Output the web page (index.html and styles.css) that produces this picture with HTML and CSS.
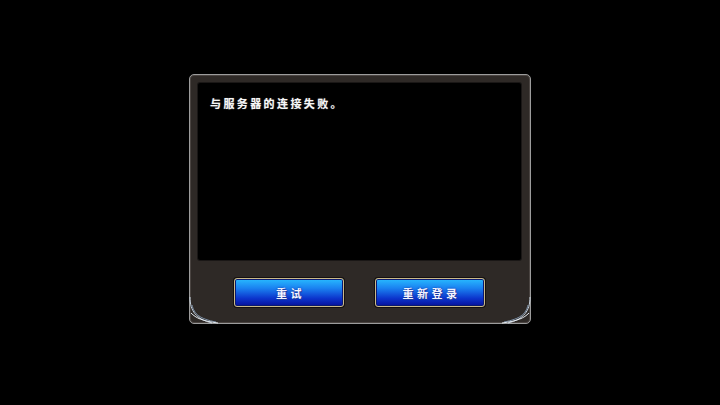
FILE: index.html
```html
<!DOCTYPE html>
<html lang="zh">
<head>
<meta charset="utf-8">
<link rel="stylesheet" href="styles.css">
</head>
<body>
<div class="stage">
  <div class="dialog">
    <div class="panel">
      <p class="msg">与服务器的连接失败。</p>
    </div>
    <div class="actions">
      <button class="btn">重试</button>
      <button class="btn">重新登录</button>
    </div>
    <svg class="corner corner-left" width="32" height="32" viewBox="0 0 32 32">
      <path d="M2 4 C2 18 8 26 24 30" fill="none" stroke="#c8d4e0" stroke-width="1"/>
      <path d="M4 12 C6 21 12 26 28 29" fill="none" stroke="#7f93aa" stroke-width="1"/>
      <path d="M3 20 C8 25 14 28 30 30" fill="none" stroke="#e4eaf0" stroke-width="1"/>
    </svg>
    <svg class="corner corner-right" width="32" height="32" viewBox="0 0 32 32">
      <path d="M30 4 C30 18 24 26 8 30" fill="none" stroke="#c8d4e0" stroke-width="1"/>
      <path d="M28 12 C26 21 20 26 4 29" fill="none" stroke="#7f93aa" stroke-width="1"/>
      <path d="M29 20 C24 25 18 28 2 30" fill="none" stroke="#e4eaf0" stroke-width="1"/>
    </svg>
  </div>
</div>
</body>
</html>
```
FILE: styles.css
```css
html, body {
  margin: 0;
  padding: 0;
  background: #000;
  width: 720px;
  height: 405px;
  overflow: hidden;
}
.stage {
  display: flex;
  justify-content: center;
  padding-top: 74px;
}
.dialog {
  position: relative;
  box-sizing: border-box;
  width: 342px;
  height: 250px;
  border: 1px solid #9c9c9c;
  border-radius: 5px;
  background: #2e2926;
  box-shadow: inset 0 0 0 1px #4a4441;
  padding: 8px 9px 0 8px;
  display: flex;
  flex-direction: column;
}
.panel {
  height: 177px;
  background: #000;
  border-radius: 2px;
  box-shadow: 0 0 0 1px #1a1716;
  box-sizing: border-box;
  padding: 14px 12px 0;
}
.msg {
  margin: 0;
  color: #f6f6f6;
  font-family: "Noto Sans CJK SC", sans-serif;
  font-size: 11px;
  line-height: 12px;
  letter-spacing: 2.4px;
  font-weight: 700;
  text-shadow: 0 0 1px #888;
}
.actions {
  display: flex;
  justify-content: center;
  gap: 31px;
  padding-top: 18px;
}
.btn {
  box-sizing: border-box;
  width: 110px;
  height: 29px;
  border: 1px solid #c9b98a;
  border-radius: 3px;
  background: linear-gradient(to bottom, #28baff 0%, #1a80f0 35%, #0c34cc 72%, #06109a 100%);
  box-shadow: 0 0 0 1px #141010, inset 0 0 0 1px #0a1a70;
  color: #f4f4ff;
  font-family: "Noto Sans CJK SC", sans-serif;
  font-size: 11px;
  font-weight: 700;
  letter-spacing: 3.5px;
  padding: 0 0 0 3px;
  text-shadow: 0 0 2px #1030a0, 1px 1px 0 #2040a0;
  margin: 0;
}
.corner {
  position: absolute;
  bottom: -2px;
}
.corner-left {
  left: -2px;
}
.corner-right {
  right: -2px;
}
```
